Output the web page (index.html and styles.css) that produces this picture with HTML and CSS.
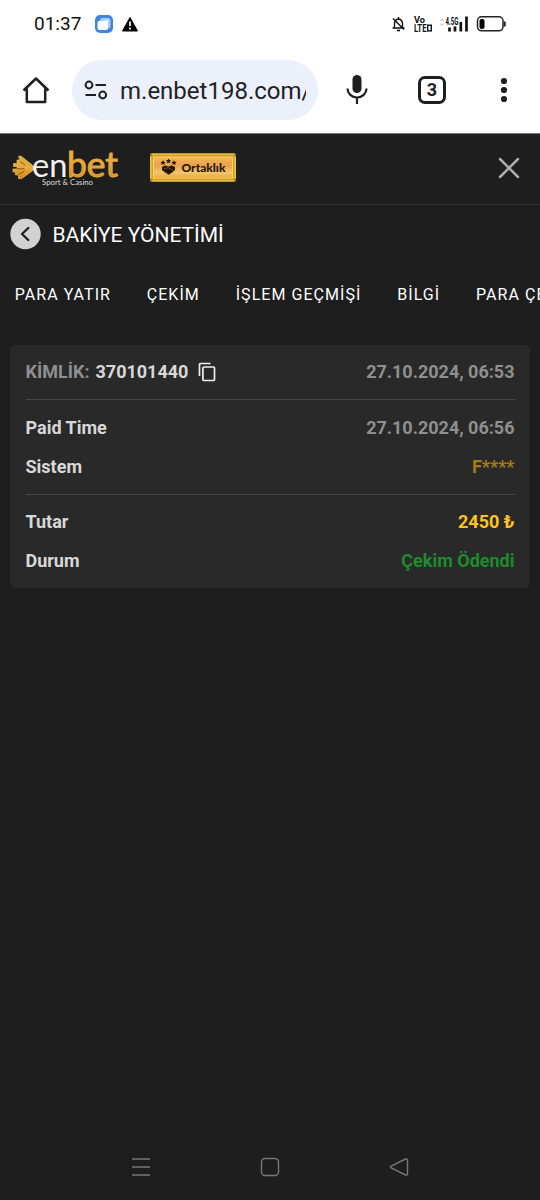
FILE: index.html
```html
<!DOCTYPE html>
<html lang="tr">
<head>
<meta charset="utf-8">
<title>Bakiye Yönetimi</title>
<link rel="stylesheet" href="styles.css">
</head>
<body>
<div class="status">
  <span class="clock">01:37</span>
  <svg class="app" width="20" height="20" viewBox="0 0 20 20"><rect x="1" y="1" width="18" height="18" rx="5" fill="#3f86dc"/><rect x="6" y="4" width="10.500" height="10.500" rx="2.500" fill="#a9cdf8"/><path d="M5 7h6l1-1h2v8q0 2-2 2H5.500q-2 0-2-2V9q0-2 1.500-2z" fill="#fff"/></svg>
  <svg class="warn" width="18" height="16" viewBox="0 0 18 16"><path d="M9 1.500L16.500 15h-15z" fill="#000" stroke="#000" stroke-linejoin="round"/><path d="M9 5.500v4.500M9 11.500v2" stroke="#fff" stroke-width="1.700"/></svg>
  <svg class="signals" width="120" height="20" viewBox="390 14 120 20">
    <g fill="none" stroke="#111" stroke-width="1.400"><path d="M392.500 28h12M394.500 28v-4q0-4.500 4-5 4 .5 4 5v4M398.500 17v2M393 18.500l11 11"/><path d="M397 30.500h3" stroke-width="1.600"/></g>
    <g class="tiny"><text x="414" y="22.800" font-size="9" textLength="11" lengthAdjust="spacingAndGlyphs">Vo</text><text x="414" y="31.500" font-size="10" textLength="12.500" lengthAdjust="spacingAndGlyphs">LTE</text><text x="445.500" y="25" font-size="10" textLength="13" lengthAdjust="spacingAndGlyphs">4.5G</text></g>
    <rect x="427.700" y="25.200" width="3.600" height="5.700" fill="none" stroke="#111" stroke-width="1.400"/>
    <path d="M440.500 21l1.500-2 1.500 2M440.500 23.500l1.500 2 1.500-2" fill="none" stroke="#aaa" stroke-width=".8"/>
    <path d="M449.500 31.500v-4M455 31.500v-5M460.800 31.500v-9.500M466.500 31.500V16.500" stroke="#111" stroke-width="2.700"/>
    <rect x="477.500" y="16.800" width="25.500" height="14" rx="4" fill="none" stroke="#222" stroke-width="1.500"/><rect x="479.500" y="19" width="5" height="10" rx="2" fill="#000"/><path d="M504.700 21.500v5" stroke="#222" stroke-width="2"/>
  </svg>
</div>
<div class="toolbar">
  <svg class="home" width="28" height="28" viewBox="0 0 28 28" fill="none" stroke="#1f1f1f" stroke-width="2.500"><path d="M1.500 14.500L14 2.500l12.500 12M4.800 12.500V26h18.400V12.500" stroke-linejoin="round"/></svg>
  <div class="url">
    <svg width="24" height="20" viewBox="0 0 24 20" fill="none" stroke="#1f1f1f" stroke-width="2"><circle cx="5" cy="5" r="3.400"/><path d="M11.500 5H22M1.500 15H12"/><circle cx="18.700" cy="15" r="3.400"/></svg>
    <span class="address">m.enbet198.com/</span>
  </div>
  <svg class="mic" width="24" height="30" viewBox="0 0 24 30"><rect x="7.500" y="0" width="9" height="18" rx="4.500" fill="#1f1f1f"/><path d="M2.500 13.500a9.500 9 0 0 0 19 0M12 22.500V29" fill="none" stroke="#1f1f1f" stroke-width="2.200"/></svg>
  <div class="count">3</div>
  <svg class="dots" width="8" height="26" viewBox="0 0 8 26" fill="#1f1f1f"><circle cx="4" cy="4" r="3.100"/><circle cx="4" cy="13" r="3.100"/><circle cx="4" cy="22" r="3.100"/></svg>
</div>
<header class="site">
  <svg class="logo" width="110" height="44" viewBox="10 145 110 44">
    <defs><linearGradient id="gold" x1="0" y1="0" x2="0" y2="1"><stop offset="0" stop-color="#d4b13d"/><stop offset=".5" stop-color="#eda93c"/><stop offset="1" stop-color="#d08319"/></linearGradient></defs>
    <path d="M18.500 156.500q1.500-1 3 0L33.500 166q2 2 0 4l-11 8q-2 1.300-4 .5v-3.500h-3v-3h-2.500v-3h4v-2.500h-3.500v-3h3.500v-3.500h3z" fill="url(#gold)" stroke="#e8c252" stroke-width=".7"/>
    <path d="M20 161.500l5 3.500M16.500 168.800h8M18.500 174.500l6-3.500" stroke="#6b460e" stroke-width=".8" fill="none"/>
    <text class="en" x="32" y="177" textLength="35.500" lengthAdjust="spacingAndGlyphs">en</text>
    <text class="bet" x="67" y="176.500" textLength="51" lengthAdjust="spacingAndGlyphs">bet</text>
    <text class="tag" x="42" y="184.800" textLength="51" lengthAdjust="spacingAndGlyphs">Sport &amp; Casino</text>
  </svg>
  <svg class="partner" width="86" height="29" viewBox="0 0 86 29">
    <defs><linearGradient id="plate" x1="0" y1="0" x2="0" y2="1"><stop offset="0" stop-color="#f5b556"/><stop offset=".4" stop-color="#e9a04a"/><stop offset=".75" stop-color="#f5c56c"/><stop offset="1" stop-color="#e9a53b"/></linearGradient></defs>
    <rect x=".8" y="1" width="84.400" height="27" rx="1.500" fill="#d59d2c" stroke="#e6c443" stroke-width="1.600"/>
    <rect x="3.500" y="4" width="79" height="21" fill="url(#plate)" stroke="#f8d55c" stroke-width="1"/>
    <path d="M0 3l2-1M86 3l-2-1M0 26l2 1M86 26l-2 1" stroke="#73500d"/>
    <g fill="#211709"><path id="star" d="M18.500 5.500l.8 1.500 1.700.3-1.200 1.200.3 1.700-1.600-.8-1.600.8.300-1.700-1.200-1.200 1.700-.3z"/><use href="#star" x="-5.500" y="1.700"/><use href="#star" x="5.500" y="1.700"/><path d="M12 14l3-1.500 3.500 1 3.500-1 3 1.500v3l-3.500 3-3 1.800-3-1.800-3.500-3z"/></g>
    <path d="M14 16l4-1.500 5 3M15 19l2.500 1.500" fill="none" stroke="#c48538" stroke-width=".5"/>
    <text class="plate" x="31.500" y="18.500" textLength="44" lengthAdjust="spacingAndGlyphs">Ortaklık</text>
  </svg>
  <svg class="close" width="22" height="22" viewBox="0 0 22 22"><path d="M2 2l18 18M20 2L2 20" stroke="#acacac" stroke-width="2.500" stroke-linecap="round"/></svg>
</header>
<div class="heading">
  <svg width="32" height="32" viewBox="0 0 32 32"><circle cx="15.500" cy="16" r="15.200" fill="#d2d2d2"/><path d="M18.300 10L12 16l6.300 6" fill="none" stroke="#1f1f1f" stroke-width="2.300" stroke-linecap="round" stroke-linejoin="round"/></svg>
  <h1>BAKİYE YÖNETİMİ</h1>
</div>
<nav class="tabs"><span>PARA YATIR</span><span>ÇEKİM</span><span>İŞLEM GEÇMİŞİ</span><span>BİLGİ</span><span>PARA ÇEKME</span></nav>
<main class="card">
  <div class="row first"><div class="ident"><span class="muted">KİMLİK:</span> 370101440<svg class="copy" width="18" height="20" viewBox="0 0 18 20" fill="none" stroke="#eee" stroke-width="1.700"><path d="M1.500 14V2.500q0-1 1-1H12.500"/><rect x="4.900" y="5" width="11.600" height="13.500" rx="1"/></svg></div><span class="muted">27.10.2024, 06:53</span></div>
  <div class="group">
    <div class="row"><span>Paid Time</span><span class="muted">27.10.2024, 06:56</span></div>
    <div class="row"><span>Sistem</span><span class="system">F****</span></div>
  </div>
  <div class="group">
    <div class="row"><span>Tutar</span><span class="amount">2450 ₺</span></div>
    <div class="row"><span>Durum</span><span class="paid">Çekim Ödendi</span></div>
  </div>
</main>
<footer class="keys">
  <svg width="20" height="20" viewBox="0 0 20 20"><path d="M1 2h18M1 10h18M1 18h18"/></svg>
  <svg width="20" height="20" viewBox="0 0 20 20"><rect x="1.500" y="1.500" width="17" height="17" rx="3.500"/></svg>
  <svg width="20" height="20" viewBox="0 0 20 20"><path d="M16.500 2L2.200 9q-1.500 1 0 2l14.300 7q2 .5 2-1.500v-13q0-2-2-1.500z"/></svg>
</footer>
</body>
</html>
```
FILE: styles.css
```css
* { box-sizing: border-box; }
body {
  margin: 0;
  width: 540px;
  height: 1200px;
  overflow: hidden;
  display: flex;
  flex-direction: column;
  background: #1e1e1e;
  color: #fff;
  font-family: Roboto, "Noto Sans", sans-serif;
}
svg { display: block; flex: none; overflow: visible; }
.status {
  height: 48px;
  display: flex;
  align-items: center;
  padding-left: 34px;
  background: #fff;
  color: #111;
}
.clock { width: 60px; font-size: 19px; line-height: 22px; }
.warn { margin-left: 7px; }
.signals { margin-left: 251px; }
.tiny { font-family: Roboto, sans-serif; font-weight: 700; fill: #111; }
.toolbar {
  height: 86px;
  display: flex;
  align-items: center;
  padding: 0 0 2px 22px;
  background: #fff;
  border-bottom: 1px solid #777;
  color: #1f1f1f;
}
.url {
  width: 246px;
  height: 60px;
  margin-left: 22px;
  padding-left: 12px;
  display: flex;
  align-items: center;
  gap: 12px;
  border-radius: 30px;
  background: #ebf0fa;
}
.address {
  width: 186px;
  padding-top: 2px;
  overflow: hidden;
  white-space: nowrap;
  font-size: 24px;
  line-height: 34px;
}
.mic { margin-left: 27px; }
.count {
  width: 28px;
  height: 28px;
  margin-left: 49px;
  border: 3px solid #1f1f1f;
  border-radius: 7px;
  font-size: 18px;
  font-weight: 700;
  line-height: 22px;
  text-align: center;
}
.dots { margin-left: 54px; }
.site {
  height: 71px;
  display: flex;
  align-items: center;
  padding-left: 10px;
  border-bottom: 1px solid #303030;
}
.logo { margin-bottom: 4px; }
.en, .bet { font-family: Lato, sans-serif; }
.en { font-size: 32px; font-weight: 400; fill: #f2f2f2; }
.bet { font-size: 35px; font-weight: 400; fill: url(#gold); stroke: #e0a83c; stroke-width: 1px; }
.tag { font-family: Lato, sans-serif; font-size: 8px; fill: #ddd; }
.partner { margin: 0 0 3px 30px; }
.plate { font-family: Lato, sans-serif; font-size: 12px; font-weight: 900; fill: #211709; }
.close { margin: 0 0 2px 261.5px; }
.heading {
  height: 58px;
  display: flex;
  align-items: center;
  gap: 10.5px;
  padding-left: 10px;
}
h1 { margin: 0; padding-top: 1px; font-size: 21px; font-weight: 400; line-height: 30px; }
.tabs {
  height: 62px;
  display: flex;
  align-items: center;
  padding-left: 14.7px;
  gap: 35.8px;
  overflow: hidden;
  white-space: nowrap;
  font-size: 16px;
  letter-spacing: 1.05px;
}
.card {
  height: 243px;
  margin: 20px 10px 0;
  padding: 0 15.5px;
  border-radius: 5px;
  background: #292929;
  color: #d8d8d8;
  font-size: 18px;
  font-weight: 700;
}
.row {
  height: 39px;
  display: flex;
  align-items: center;
  justify-content: space-between;
}
.first { height: 54px; padding-bottom: 1px; }
.ident { display: flex; align-items: center; gap: 6px; }
.copy { margin-left: 3.5px; }
.group { height: 94.5px; padding-top: 7.5px; border-top: 1px solid #474747; }
.group + .group { padding-top: 7px; }
.muted { color: #8f8f8f; }
.system { color: #a47c16; }
.amount { color: #ffc220; }
.paid { color: #1c8c2c; }
.keys {
  display: flex;
  gap: 109px;
  margin-top: auto;
  padding: 0 0 23px 131px;
}
.keys svg { fill: none; stroke: #777; stroke-width: 1.4px; }
```
